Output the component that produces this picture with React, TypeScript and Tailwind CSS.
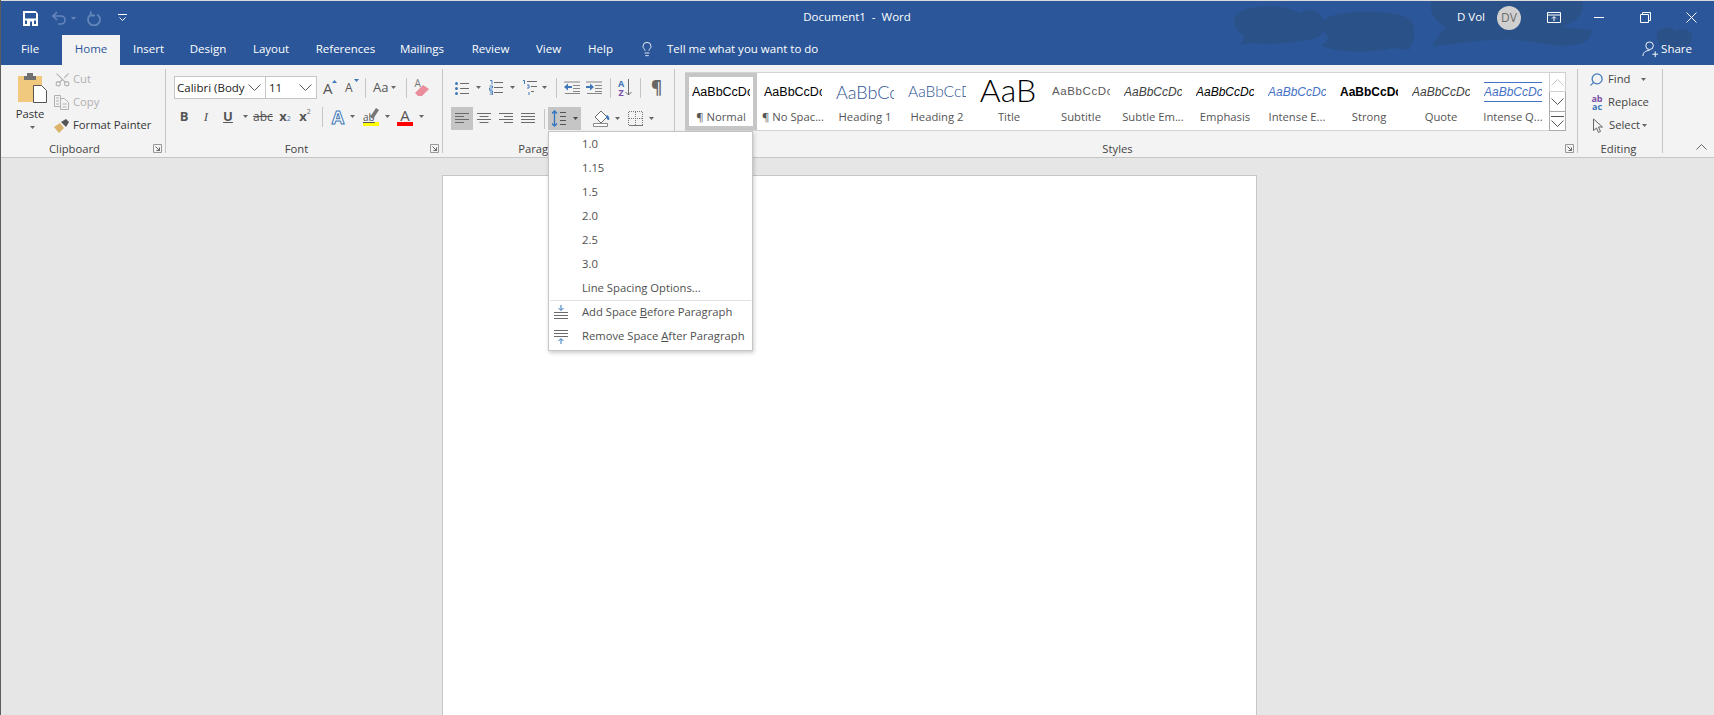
import React from "react";
import { Scissors, Lightbulb, Search } from "lucide-react";

const Caret = ({ className = "" }: { className?: string }) => (
  <svg width="5" height="3" viewBox="0 0 5 3" className={"shrink-0 " + className}><path d="M0 0h5L2.5 3z" fill="#666" /></svg>
);
const Launcher = () => (
  <svg width="9" height="9" viewBox="0 0 9 9" className="absolute right-[3px] bottom-0" fill="none" stroke="#666">
    <path d="M.5 8.5v-8h8v8z" stroke="#999" /><path d="M2.500 2.500l4 4M6.500 3.500v3h-3" />
  </svg>
);
const Sep = ({ className = "" }: { className?: string }) => <div className={"w-px h-[20px] bg-[#c6c6c6] shrink-0 " + className} />;
const Lines = ({ rows, className = "" }: { rows: [number, number][]; className?: string }) => (
  <svg width="14" height="13" viewBox="0 0 14 13" className={"shrink-0 " + className} stroke="#6b6b6b" fill="none">
    {rows.map(([a, b], i) => <path key={i} d={`M${a} ${1.5 + i * 3}H${b}`} />)}
  </svg>
);
const Chevron = ({ color = "#555" }: { color?: string }) => (
  <svg width="13" height="7" viewBox="0 0 13 7" fill="none" stroke={color}><path d="M.5.5l6 6 6-6" /></svg>
);

const Group = ({ w, label, launcher, children, labelClass = "" }: { w: string; label?: string; launcher?: boolean; children: React.ReactNode; labelClass?: string }) => (
  <div className={"relative flex flex-col h-[84px] shrink-0 border-r border-[#c6c6c6] " + w}>
    <div className="h-[72px]">{children}</div>
    <div className={"relative h-[12px] leading-[16px] text-center text-[#444] " + labelClass}>
      {label}
      {launcher && <Launcher />}
    </div>
  </div>
);

const styles: { label: string; cls: string; text?: string; extra?: string }[] = [
  { label: "¶ Normal", cls: "text-[12.5px] text-black" },
  { label: "¶ No Spac...", cls: "text-[12.5px] text-black" },
  { label: "Heading 1", cls: "text-[18px] font-light text-[#2f5496] [font-family:Lato,sans-serif]" },
  { label: "Heading 2", cls: "text-[15.5px] font-light text-[#2f5496] [font-family:Lato,sans-serif]" },
  { label: "Title", cls: "text-[32px] font-light text-black [font-family:Lato,sans-serif]", text: "AaB", extra: "h-[26px] mt-[2px] overflow-hidden !items-end ml-[-2px]" },
  { label: "Subtitle", cls: "text-[11.5px] tracking-[0.6px] text-[#5a5a5a]" },
  { label: "Subtle Em...", cls: "text-[12px] italic text-[#404040]" },
  { label: "Emphasis", cls: "text-[12px] italic text-black" },
  { label: "Intense E...", cls: "text-[12px] italic text-[#4472c4]" },
  { label: "Strong", cls: "text-[12px] font-bold text-black" },
  { label: "Quote", cls: "text-[12px] italic text-[#404040]" },
  { label: "Intense Q...", cls: "text-[12px] italic text-[#4472c4]", extra: "border-y border-[#4472c4] h-[20px]" },
];

const menuItems = ["1.0", "1.15", "1.5", "2.0", "2.5", "3.0", "Line Spacing Options..."];

export default function App() {
  return (
    <div className="relative w-[1714px] h-[715px] overflow-hidden bg-[#e6e6e6] flex flex-col text-[11.5px] [font-family:'Open_Sans',sans-serif]">
      {/* left window edge */}
      <div className="absolute left-0 top-0 bottom-0 w-px bg-[#5c5c5c] z-30" />

      {/* header */}
      <div className="relative h-[65px] shrink-0 bg-[#2b579a] border-t border-[#dcdcdc] text-white flex flex-col">
        <svg width="494" height="65" viewBox="0 0 494 65" className="absolute right-0 top-0" fill="#2a5289">
          <path d="M18 12c14-9 46-9 62 0 8-5 18-4 22 4 6 10 1 20-10 22-26 5-44 6-60 4l-12 2 5-8C16 30 10 20 18 12z" />
          <path d="M108 16c18-7 62-8 80 1 10 7 7 24 1 31l2 1-20-2c-18 5-46 5-62 0l-8-2 8-8c-8-8-8-17-1-21z" />
          <path d="M212 0h150c4 10-4 20-20 26l30 3c-2 8-4 12-14 14-22 5-42-3-62-4-30-2-50 4-84 6 4-8 10-14 14-18-12-8-18-18-14-27z" />
          <path d="M438 30c6-5 14-4 18 0 6-4 14-2 16 4 2 7-4 12-14 16l-12-1c-8-6-12-13-8-19z" />
        </svg>
        {/* title row */}
        <div className="relative h-[34px] shrink-0 grid grid-cols-[1fr_auto_1fr] items-center">
          <div className="flex items-center">
            <svg width="15" height="15" viewBox="0 0 15 15" className="ml-[23px]">
              <path d="M0 0h12.500L15 2.500V15H0z" fill="#fff" />
              <path d="M2 2h11v5.500H2zM2 9.500h2V13H2zM11 9.500h2V13h-2zM7 10.500h2V15H7z" fill="#2b579a" />
            </svg>
            <svg width="15" height="14" viewBox="0 0 15 14" className="ml-[14px]" fill="none" stroke="#6486bb" strokeWidth="1.6">
              <path d="M5 1L1 5l4 4M1 5h8a4 4 0 0 1 0 8H6" />
            </svg>
            <svg width="5" height="3" viewBox="0 0 5 3" className="ml-[4px]"><path d="M0 0h5L2.5 3z" fill="#6486bb" /></svg>
            <svg width="14" height="15" viewBox="0 0 14 15" className="ml-[11px]" fill="none" stroke="#6486bb" strokeWidth="1.8">
              <path d="M3.800 3.400a6 6 0 1 0 6.400 0M3.800 .5v4H8" />
            </svg>
            <svg width="9" height="8" viewBox="0 0 9 8" className="ml-[17px]" fill="none" stroke="#fff">
              <path d="M0 .5h9M1.500 3.500l3 3 3-3" />
            </svg>
          </div>
          <div className="text-[11.5px] pb-[2px]">Document1&nbsp; -&nbsp; Word</div>
          <div className="flex items-center justify-end pb-[1px]">
            <span className="mr-[12px] pb-[1px]">D Vol</span>
            <div className="w-[24px] h-[24px] rounded-full bg-[#d0d0d0] text-[#6b6b6b] text-[12px] flex items-center justify-center mr-[26px]">DV</div>
            <svg width="14" height="11" viewBox="0 0 14 11" fill="none" stroke="#fff" className="mr-[33px]"><path d="M.5.5h13v10H.5zM.5 3h13M7 9V5M5 6.500l2-2 2 2" /></svg>
            <div className="w-[10px] h-px bg-white mr-[36px]" />
            <svg width="11" height="11" viewBox="0 0 11 11" fill="none" stroke="#fff" className="mr-[35px]"><path d="M.5 2.500h8v8h-8zM2.500 2.500v-2h8v8h-2" /></svg>
            <svg width="11" height="11" viewBox="0 0 11 11" fill="none" stroke="#fff" className="mr-[17px]"><path d="M.5.5l10 10M10.500.5l-10 10" /></svg>
          </div>
        </div>
        {/* tab row */}
        <div className="relative flex-1 flex items-stretch whitespace-nowrap text-[11.5px]">
          <div className="ml-[21px] w-[18px] flex items-center justify-center pb-[2px]">File</div>
          <div className="ml-[23px] w-[58px] bg-[#f3f3f3] text-[#2b579a] flex items-center justify-center pb-[2px]">Home</div>
          <div className="ml-[14px] w-[29px] flex items-center justify-center pb-[2px]">Insert</div>
          <div className="ml-[27px] w-[36px] flex items-center justify-center pb-[2px]">Design</div>
          <div className="ml-[27px] w-[36px] flex items-center justify-center pb-[2px]">Layout</div>
          <div className="ml-[28px] w-[57px] flex items-center justify-center pb-[2px]">References</div>
          <div className="ml-[24px] w-[48px] flex items-center justify-center pb-[2px]">Mailings</div>
          <div className="ml-[28px] w-[33px] flex items-center justify-center pb-[2px]">Review</div>
          <div className="ml-[29px] w-[25px] flex items-center justify-center pb-[2px]">View</div>
          <div className="ml-[26px] w-[27px] flex items-center justify-center pb-[2px]">Help</div>
          <div className="ml-[25px] flex items-center pb-[2px]"><Lightbulb size={16} strokeWidth={1.3} /></div>
          <div className="ml-[12px] flex items-center pb-[2px]">Tell me what you want to do</div>
          <div className="ml-auto mr-[22px] flex items-center pb-[2px]">
            <svg width="17" height="17" viewBox="0 0 18 18" fill="none" stroke="#fff" className="mr-[2px]">
              <circle cx="8" cy="5" r="4" /><path d="M1 16c0-4 3-6 7-6M11 14h6M14 11v6" />
            </svg>
            Share
          </div>
        </div>
      </div>

      {/* ribbon */}
      <div className="h-[93px] shrink-0 bg-[#f3f3f3] border-b border-[#c6c6c6] pt-[4px] flex items-start text-[#444] text-[11.25px]">
        {/* clipboard */}
        <Group w="w-[166px]" label="Clipboard" launcher labelClass="pr-[16px]">
          <div className="flex">
            <div className="w-[55px] flex flex-col items-center pl-[9px] pt-[3px]">
              <svg width="29" height="31" viewBox="0 0 29 31">
                <path d="M0 4h24v26H0z" fill="#f0c87e" />
                <path d="M6 4h3V1h6v3h3v4H6z" fill="#707070" />
                <path d="M15.500 13.500h8l5 5v12h-13z" fill="#fff" stroke="#555" />
              </svg>
              <span className="text-[#333] mt-[3px] -ml-[4px] leading-[16px]">Paste</span>
              <Caret className="mt-[4px]" />
            </div>
            <div className="flex flex-col whitespace-nowrap -mt-[1px] -ml-[1px]">
              <div className="h-[23px] flex items-center text-[#b1b1b1]">
                <Scissors size={17} strokeWidth={1.5} className="-rotate-90" />
                <span className="ml-[2px]">Cut</span>
              </div>
              <div className="h-[23px] flex items-center text-[#b1b1b1]">
                <svg width="15" height="15" viewBox="0 0 15 15" fill="none" stroke="#b1b1b1"><path d="M.5.500h6v11h-6zM6.500 3.500h4l4 4v7h-8zM2 3h3M2 6h3M2 9h3M8.500 9h4M8.500 12h4" /></svg>
                <span className="ml-[4px]">Copy</span>
              </div>
              <div className="h-[23px] flex items-center text-[#333]">
                <svg width="16" height="15" viewBox="0 0 16 15"><path d="M0 9l6-4 4 5-5 5z" fill="#dcb36a" /><path d="M7 4l5-3 3 3-3 5z" fill="#555" /></svg>
                <span className="ml-[3px]">Format Painter</span>
              </div>
            </div>
          </div>
        </Group>

        {/* font */}
        <Group w="w-[277px]" label="Font" launcher labelClass="pr-[15px]">
          <div className="pt-[7px] pl-[8px]">
            <div className="flex items-center h-[23px]">
              <div className="w-[92px] h-[23px] bg-white border border-[#c6c6c6] flex items-center justify-between pl-[2px] pr-[4px] text-[#222] whitespace-nowrap text-[11.5px]">
                <span>Calibri (Body</span><Chevron />
              </div>
              <div className="w-[52px] h-[23px] -ml-px bg-white border border-[#c6c6c6] flex items-center justify-between pl-[3px] pr-[4px] text-[#222] text-[11.5px]">
                <span>11</span><Chevron />
              </div>
              <div className="ml-[6px] w-[14px] flex items-start">
                <span className="text-[15px] text-[#555] leading-[20px]">A</span>
                <svg width="5" height="3" viewBox="0 0 5 3" className="shrink-0 -ml-[1px] mt-[2px]"><path d="M0 3h5L2.500 0z" fill="#3f78b8" /></svg>
              </div>
              <div className="ml-[8px] w-[14px] flex items-start">
                <span className="text-[12px] text-[#555] leading-[22px]">A</span>
                <svg width="5" height="3" viewBox="0 0 5 3" className="shrink-0 ml-[1px] mt-[2px]"><path d="M0 0h5L2.500 3z" fill="#3f78b8" /></svg>
              </div>
              <Sep className="ml-[6px]" />
              <span className="ml-[7px] text-[13px] text-[#555]">Aa</span>
              <Caret className="ml-[3px]" />
              <Sep className="ml-[10px]" />
              <div className="relative ml-[7px] w-[16px] h-[18px]">
                <span className="absolute left-0 -top-[3px] text-[10px] text-[#777]">A</span>
                <svg width="16" height="14" viewBox="0 0 16 14" className="absolute left-0 bottom-0"><path d="M1 10l8-8 6 4-7 7H4z" fill="#ea8d9a" /></svg>
              </div>
            </div>
            <div className="flex items-center h-[23px] mt-[6px] -ml-[1px]">
              <div className="w-[22px] flex justify-center font-bold text-[13px] text-[#555]">B</div>
              <div className="w-[22px] flex justify-center italic text-[13px] text-[#555] [font-family:'Liberation_Serif',serif]">I</div>
              <div className="w-[22px] flex justify-center font-bold underline text-[13px] text-[#555]">U</div>
              <div className="w-[12px] flex justify-center"><Caret /></div>
              <div className="w-[24px] flex justify-center line-through text-[12px] text-[#555]">abc</div>
              <div className="w-[20px] flex justify-center items-baseline font-bold text-[13px] text-[#555]">x<span className="text-[7px] font-normal text-[#3f78b8]">2</span></div>
              <div className="w-[20px] flex justify-center items-start font-bold text-[13px] text-[#555]">x<span className="text-[7px] leading-[10px] font-normal text-[#666]">2</span></div>
              <div className="w-[14px] flex justify-center"><Sep /></div>
              <div className="w-[18px] flex justify-center font-bold text-[18px] leading-[20px] text-white [-webkit-text-stroke:1px_#3f78b8]">A</div>
              <div className="w-[10px] flex justify-center"><Caret /></div>
              <div className="ml-[2px] w-[24px] flex flex-col items-center">
                <div className="flex items-end h-[14px] w-[16px] relative">
                  <span className="text-[10px] leading-[10px] text-[#555] underline">ab</span>
                  <svg width="9" height="11" viewBox="0 0 9 11" className="absolute right-0 top-0"><path d="M0 9l6-9 3 2-6 9z" fill="#777" /></svg>
                </div>
                <div className="w-[16px] h-[4px] bg-[#ffff00]" />
              </div>
              <div className="w-[8px] flex justify-center"><Caret /></div>
              <div className="ml-[2px] w-[24px] flex flex-col items-center">
                <span className="text-[15px] leading-[14px] text-[#555] h-[14px]">A</span>
                <div className="w-[16px] h-[4px] bg-[#ff0000]" />
              </div>
              <div className="w-[8px] flex justify-center"><Caret /></div>
            </div>
          </div>
        </Group>

        {/* paragraph */}
        <Group w="w-[232px]" label="Paragraph" launcher labelClass="pr-[26px]">
          <div className="pt-[7px]">
            <div className="flex items-center h-[23px]">
              <svg width="14" height="14" viewBox="0 0 14 14" className="ml-[12px] shrink-0">
                <path d="M5 2.500h9M5 7.500h9M5 12.500h9" stroke="#6b6b6b" /><circle cx="1.500" cy="2.500" r="1.500" fill="#3f78b8" /><circle cx="1.500" cy="7.500" r="1.500" fill="#3f78b8" /><circle cx="1.500" cy="12.500" r="1.500" fill="#3f78b8" />
              </svg>
              <Caret className="ml-[7px]" />
              <svg width="14" height="15" viewBox="0 0 14 15" className="ml-[8px] shrink-0">
                <path d="M5 2.500h9M5 7.500h9M5 12.500h9" stroke="#6b6b6b" /><path d="M1 .5h2v4M.5 6h3v2h-3v2h3M.5 11h3v4h-3M1 13h2" fill="none" stroke="#3f78b8" strokeWidth=".9" />
              </svg>
              <Caret className="ml-[7px]" />
              <svg width="15" height="15" viewBox="0 0 15 15" className="ml-[7px] shrink-0">
                <path d="M5 1.500h10M9 6.500h6M9 11.500h3" stroke="#6b6b6b" /><path d="M1 .5h1.500v3.500M5 5h2v3H5M7 12v3" fill="none" stroke="#3f78b8" />
              </svg>
              <Caret className="ml-[5px]" />
              <Sep className="ml-[9px]" />
              <svg width="16" height="13" viewBox="0 0 16 13" className="ml-[7px] shrink-0">
                <path d="M0 1h16M9 4.500h7M9 7.500h7M9 10.500h7M1 12.500h15" stroke="#6b6b6b" strokeWidth=".8" /><path d="M0 6l4-3.500V5h4v2H4v2.500z" fill="#3f78b8" />
              </svg>
              <svg width="16" height="13" viewBox="0 0 16 13" className="ml-[6px] shrink-0">
                <path d="M0 1h16M9 4.500h7M9 7.500h7M9 10.500h7M1 12.500h15" stroke="#6b6b6b" strokeWidth=".8" /><path d="M8 6L4 2.500V5H0v2h4v2.500z" fill="#3f78b8" />
              </svg>
              <Sep className="ml-[8px]" />
              <div className="ml-[7px] w-[15px] flex items-center">
                <div className="flex flex-col items-center text-[9px] leading-[9px] font-bold">
                  <span className="text-[#3f78b8]">A</span><span className="text-[#7c4fa8]">Z</span>
                </div>
                <svg width="7" height="17" viewBox="0 0 7 17" fill="none" stroke="#6b6b6b" className="ml-px"><path d="M3.500 0v16M.5 13l3 3 3-3" /></svg>
              </div>
              <Sep className="ml-[7px]" />
              <span className="ml-[10px] text-[17px] font-bold text-[#666] leading-none">¶</span>
            </div>
            <div className="flex items-center h-[23px] mt-[8px]">
              <div className="ml-[8px] w-[22px] h-[23px] bg-[#c5c5c5] flex items-center justify-center">
                <Lines rows={[[0, 14], [0, 9], [0, 14], [0, 9]]} />
              </div>
              <Lines className="ml-[4px]" rows={[[0, 14], [2.5, 11.5], [0, 14], [2.5, 11.5]]} />
              <Lines className="ml-[8px]" rows={[[0, 14], [5, 14], [0, 14], [5, 14]]} />
              <Lines className="ml-[8px]" rows={[[0, 14], [0, 14], [0, 14], [0, 14]]} />
              <Sep className="ml-[9px]" />
              <div className="ml-[3px] w-[33px] h-[23px] bg-[#c5c5c5] flex items-center pl-[4px]">
                <svg width="14" height="17" viewBox="0 0 14 17" className="shrink-0">
                  <path d="M8 2.500h6M8 6.500h6M8 10.500h6M8 14.500h6" stroke="#555" /><path d="M2.500 1v15M0 3.500L2.500 1 5 3.500M0 13.500L2.500 16 5 13.500" fill="none" stroke="#2f74c0" strokeWidth="1.300" />
                </svg>
                <Caret className="ml-[7px] [&>path]:fill-[#444]" />
              </div>
              <svg width="17" height="17" viewBox="0 0 17 17" className="ml-[12px] shrink-0">
                <path d="M8 1l6 6-6 6-6-6z" fill="#fff" stroke="#6b6b6b" /><path d="M14 5c2 1 3 4 2 5-2 0-3-2-3-4z" fill="#3f78b8" /><path d="M.5 13.500h14v3H.5z" fill="#fff" stroke="#8a8a8a" />
              </svg>
              <Caret className="ml-[5px]" />
              <svg width="15" height="15" viewBox="0 0 15 15" className="ml-[8px] shrink-0" fill="none" stroke="#777" strokeDasharray="1 1" shapeRendering="crispEdges">
                <path d="M.5.500h14M.5 7.500h14M.5.500v14M7.500.500v14M14.500.500v14" /><path d="M.5 14.500h14" strokeDasharray="none" />
              </svg>
              <Caret className="ml-[6px]" />
            </div>
          </div>
        </Group>

        {/* styles */}
        <Group w="w-[903px]" label="Styles" launcher labelClass="pr-[17px]">
          <div className="pt-[3px] pl-[10px] flex">
            <div className="w-[864px] h-[59px] bg-white border-y border-[#d4d4d4] flex">
              {styles.map((s, i) => (
                <div key={s.label} className={"w-[72px] h-[57px] shrink-0 flex flex-col items-center overflow-hidden " + (i === 0 ? "border-[4px] border-[#c6c6c6]" : "border-[4px] border-transparent")}>
                  <div className={"w-[58px] h-[30px] shrink-0 overflow-hidden flex items-center whitespace-nowrap [font-family:'Liberation_Sans',sans-serif] " + (s.text ? "justify-center" : "justify-start")}>
                    <span className={"flex items-center leading-none " + s.cls + " " + (s.extra || "")}>{s.text || "AaBbCcDc"}</span>
                  </div>
                  <div className="text-[#555] whitespace-nowrap leading-[18px] mt-[1px]">{s.label}</div>
                </div>
              ))}
            </div>
            <div className="w-[17px] h-[59px] flex flex-col bg-white">
              <div className="h-[20px] border border-[#d0d0d0] flex items-center justify-center"><svg width="13" height="7" viewBox="0 0 13 7" fill="none" stroke="#c6c6c6"><path d="M.5 6.500l6-6 6 6" /></svg></div>
              <div className="h-[19px] border-x border-[#ababab] flex items-center justify-center"><Chevron /></div>
              <div className="h-[20px] border border-[#ababab] flex flex-col items-center justify-center">
                <div className="w-[13px] h-px bg-[#555] mb-[3px]" /><Chevron />
              </div>
            </div>
          </div>
        </Group>

        {/* editing */}
        <Group w="w-[85px]" label="Editing" labelClass="pr-[3px]">
          <div className="flex flex-col whitespace-nowrap pl-[11px] -mt-[1px]">
            <div className="h-[23px] flex items-center">
              <Search size={15} strokeWidth={2} className="text-[#3f78b8] -scale-x-100" />
              <span className="ml-[4px]">Find</span>
              <Caret className="ml-[11px]" />
            </div>
            <div className="h-[23px] flex items-center">
              <div className="w-[16px] flex flex-col items-center text-[9px] leading-[8px] font-bold">
                <span className="text-[#7c4fa8]">ab</span><span className="text-[#3f78b8]">ac</span>
              </div>
              <span className="ml-[3px]">Replace</span>
            </div>
            <div className="h-[23px] flex items-center">
              <svg width="14" height="16" viewBox="0 0 14 16" fill="none" stroke="#666" className="ml-[2px] shrink-0">
                <path d="M2.500 1v11.500l3-2.500 2 4.500 2-1-2-4.500h4z" />
              </svg>
              <span className="ml-[4px]">Select</span>
              <Caret className="ml-[2px]" />
            </div>
          </div>
        </Group>
        <div className="flex-1 relative h-[84px]">
          <svg width="11" height="6" viewBox="0 0 11 6" fill="none" stroke="#666" className="absolute right-[7px] bottom-[3px]"><path d="M.5 5.500l5-5 5 5" /></svg>
        </div>
      </div>

      {/* document area */}
      <div className="flex-1 pt-[17px] pl-[442px]">
        <div className="w-[815px] h-[600px] bg-white border border-[#c6c6c6]" />
      </div>

      {/* line spacing menu */}
      <div className="absolute left-[548px] top-[131px] w-[205px] h-[220px] bg-white border border-[#c6c6c6] shadow-[1px_2px_4px_rgba(0,0,0,0.2)] text-[#505050] flex flex-col z-20 whitespace-nowrap text-[11.25px]">
        {menuItems.map((m) => (
          <div key={m} className="h-[24px] shrink-0 flex items-center pl-[33px]">{m}</div>
        ))}
        <div className="h-px mx-[1px] bg-[#e1e1e1] -mb-px shrink-0" />
        <div className="h-[24px] shrink-0 flex items-center">
          <svg width="14" height="15" viewBox="0 0 14 15" className="ml-[5px] shrink-0"><path d="M0 7.500h14M0 10.500h14M0 13.500h14" stroke="#6b6b6b" /><path d="M7 0v5M4.500 3L7 5.500 9.500 3" fill="none" stroke="#2f74c0" /></svg>
          <span className="ml-[14px]">Add Space <u>B</u>efore Paragraph</span>
        </div>
        <div className="h-[24px] shrink-0 flex items-center">
          <svg width="14" height="15" viewBox="0 0 14 15" className="ml-[5px] shrink-0"><path d="M0 1.500h14M0 4.500h14M0 7.500h14" stroke="#6b6b6b" /><path d="M7 15v-5M4.500 12L7 9.500 9.500 12" fill="none" stroke="#2f74c0" /></svg>
          <span className="ml-[14px]">Remove Space <u>A</u>fter Paragraph</span>
        </div>
      </div>
    </div>
  );
}
